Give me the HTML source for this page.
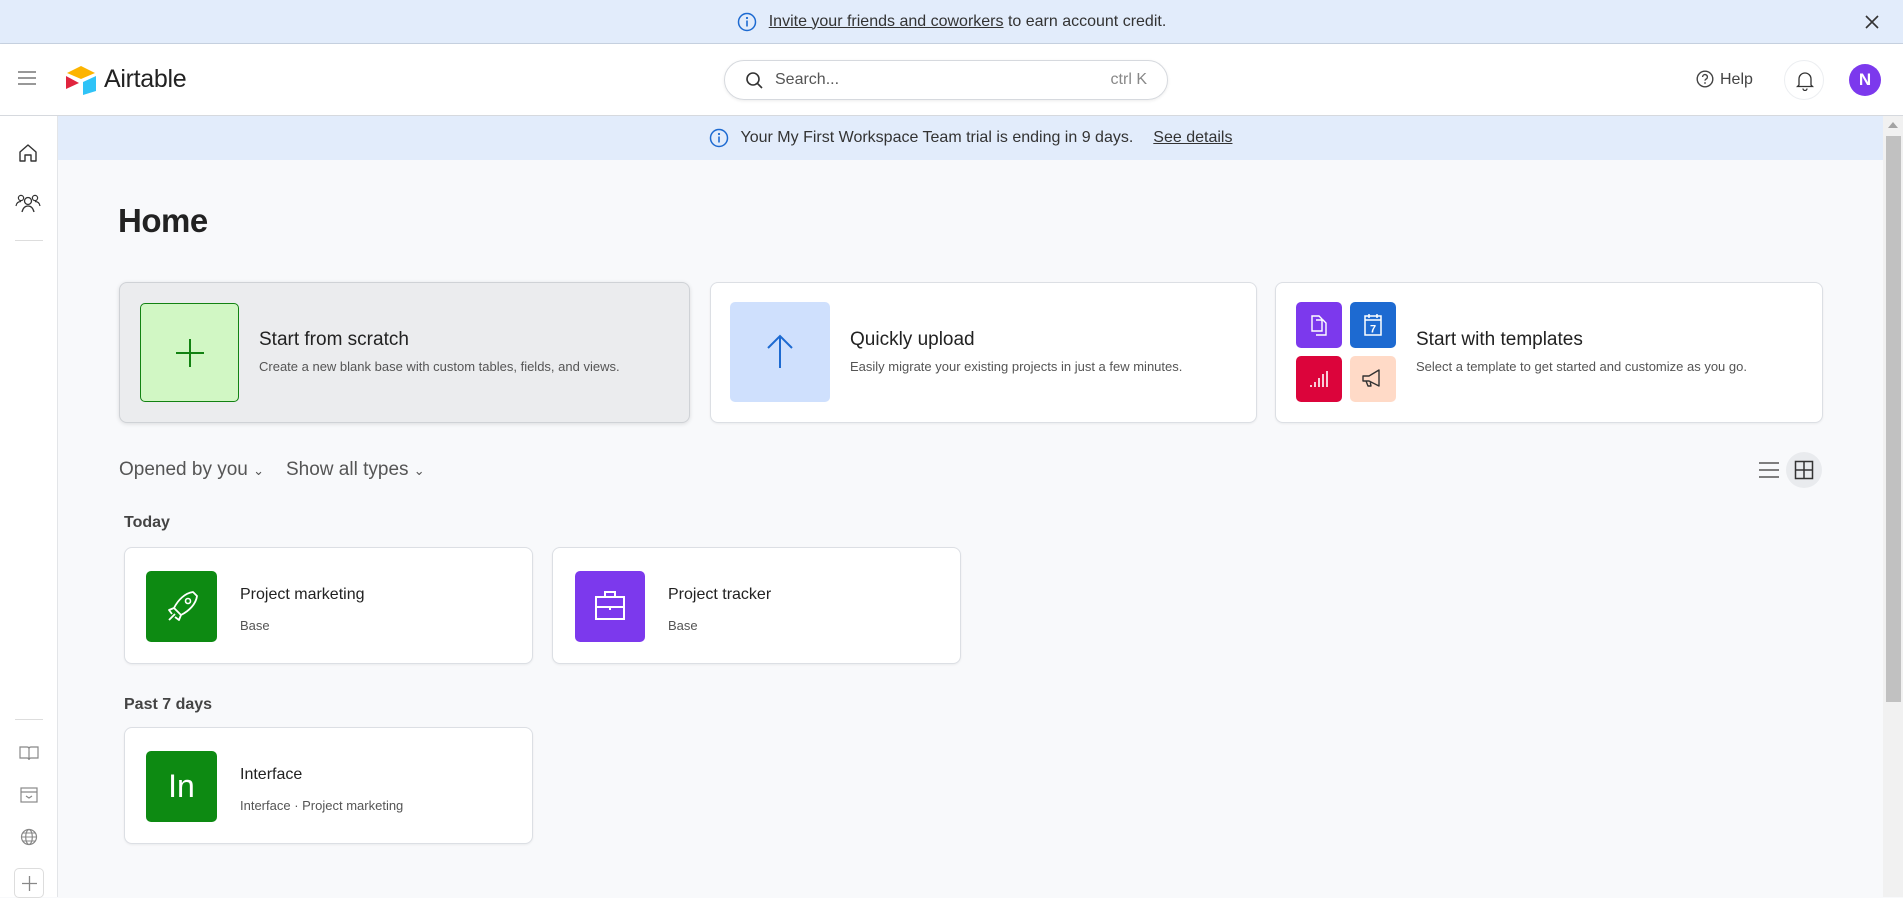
<!DOCTYPE html>
<html><head><meta charset="utf-8"><style>
*{box-sizing:border-box;margin:0;padding:0}
body{width:1903px;height:897px;overflow:hidden;font-family:"Liberation Sans",sans-serif;background:#f8f9fb;position:relative;color:#1d1f25}
.abs{position:absolute}
.topb{left:0;top:0;width:1903px;height:44px;background:#e2ecfb;border-bottom:1px solid #c8d3e2;font-size:16px;color:#333;display:flex;align-items:center;justify-content:center}
.hdr{left:0;top:44px;width:1903px;height:72px;background:#fff;border-bottom:1px solid #d6d9de;box-shadow:0 1px 3px rgba(0,0,0,.08)}
.side{left:0;top:116px;width:58px;height:781px;background:#fff;border-right:1px solid #e3e5e8}
.trial{left:58px;top:116px;width:1825px;height:44px;background:#e2ecfb;font-size:16px;color:#333;display:flex;align-items:center;justify-content:center}
.card{background:#fff;border:1px solid #dcdfe4;border-radius:8px;box-shadow:0 1px 2px rgba(0,0,0,.06)}
.bt{font-size:19px;color:#222}
.bs{font-size:13px;color:#555;margin-top:8px}
.pt{font-size:16px;color:#222}
.ps{font-size:13px;color:#555;margin-top:14px}
svg{display:block}
</style></head><body>
<div class="abs topb"><svg width="20" height="20" viewBox="0 0 20 20" style="margin-right:12px"><circle cx="10" cy="10" r="8.5" fill="none" stroke="#1d6ad1" stroke-width="1.5"/><rect x="9.2" y="8.5" width="1.6" height="6" fill="#1d6ad1"/><circle cx="10" cy="6" r="1.1" fill="#1d6ad1"/></svg><span><u>Invite your friends and coworkers</u> to earn account credit.</span></div>
<svg class="abs" style="left:1864px;top:14px" width="16" height="16" viewBox="0 0 16 16"><path d="M2 2L14 14M14 2L2 14" stroke="#333" stroke-width="1.6"/></svg>
<div class="abs hdr">
 <svg class="abs" style="left:17px;top:26px" width="20" height="16" viewBox="0 0 20 16"><path d="M1 2H19M1 8H19M1 14H19" stroke="#777" stroke-width="1.4"/></svg>
 <svg class="abs" style="left:64px;top:21px" width="34" height="30" viewBox="0 0 34 30"><path d="M3 8L17 1L31 8L17 14Z" fill="#fcb400"/><path d="M19 17L32 11V26L19 30Z" fill="#2fc3f7"/><path d="M2 11L15 18L2 24Z" fill="#e0243e"/></svg>
 <div class="abs" style="left:104px;top:21px;font-size:25px;color:#222;letter-spacing:-.3px">Airtable</div>
 <div class="abs" style="left:724px;top:16px;width:444px;height:40px;border:1px solid #d6d9de;border-radius:20px;box-shadow:0 1px 3px rgba(0,0,0,.08)">
  <svg class="abs" style="left:20px;top:10px" width="20" height="20" viewBox="0 0 20 20"><circle cx="8" cy="8" r="6" fill="none" stroke="#333" stroke-width="1.6"/><path d="M12.5 12.5L17 17" stroke="#333" stroke-width="1.6"/></svg>
  <div class="abs" style="left:50px;top:10px;font-size:16px;color:#555">Search...</div>
  <div class="abs" style="right:20px;top:10px;font-size:16px;color:#888">ctrl K</div>
 </div>
 <svg class="abs" style="left:1696px;top:26px" width="18" height="18" viewBox="0 0 18 18"><circle cx="9" cy="9" r="7.8" fill="none" stroke="#444" stroke-width="1.4"/><path d="M6.6 7a2.4 2.4 0 1 1 3.3 2.2c-.6.3-.9.7-.9 1.4" fill="none" stroke="#444" stroke-width="1.4"/><circle cx="9" cy="13" r=".9" fill="#444"/></svg>
 <div class="abs" style="left:1720px;top:27px;font-size:16px;color:#444">Help</div>
 <div class="abs" style="left:1784px;top:16px;width:40px;height:40px;border-radius:50%;border:1px solid #eceef1"><svg class="abs" style="left:11px;top:10px" width="18" height="20" viewBox="0 0 18 20"><path d="M3 14V8a6 6 0 0 1 12 0v6l1.5 1.5h-15Z M7 17.5a2 2 0 0 0 4 0" fill="none" stroke="#333" stroke-width="1.3"/></svg></div>
 <div class="abs" style="left:1849px;top:20px;width:32px;height:32px;border-radius:50%;background:#7c39ed;color:#fff;font-size:17px;font-weight:bold;text-align:center;line-height:32px">N</div>
</div>
<div class="abs side">
 <svg class="abs" style="left:17px;top:26px" width="22" height="22" viewBox="0 0 22 22"><path d="M3 10L11 3L19 10V19H14V13H8V19H3Z" fill="none" stroke="#333" stroke-width="1.4" stroke-linejoin="round"/></svg>
 <svg class="abs" style="left:15px;top:76px" width="26" height="22" viewBox="0 0 26 22"><circle cx="13" cy="9" r="3.5" fill="none" stroke="#333" stroke-width="1.3"/><path d="M7 20c1-4 3-6 6-6s5 2 6 6" fill="none" stroke="#333" stroke-width="1.3"/><circle cx="6" cy="6" r="2.6" fill="none" stroke="#333" stroke-width="1.2"/><circle cx="20" cy="6" r="2.6" fill="none" stroke="#333" stroke-width="1.2"/><path d="M1 14c.5-3 2.5-4.5 5-4.5M25 14c-.5-3-2.5-4.5-5-4.5" fill="none" stroke="#333" stroke-width="1.2"/></svg>
 <div class="abs" style="left:15px;top:124px;width:28px;height:1px;background:#ddd"></div>
 <div class="abs" style="left:15px;top:603px;width:28px;height:1px;background:#ddd"></div>
 <svg class="abs" style="left:19px;top:628px" width="20" height="18" viewBox="0 0 20 18"><path d="M1 3H8Q10 3 10 5V16Q10 14 8 14H1ZM19 3H12Q10 3 10 5V16Q10 14 12 14H19Z" fill="none" stroke="#888" stroke-width="1.2"/></svg>
 <svg class="abs" style="left:19px;top:670px" width="20" height="18" viewBox="0 0 20 18"><rect x="2" y="2" width="16" height="14" fill="none" stroke="#888" stroke-width="1.2"/><path d="M2 6H18M7 10L10 12L13 10" fill="none" stroke="#888" stroke-width="1.2"/></svg>
 <svg class="abs" style="left:19px;top:711px" width="20" height="20" viewBox="0 0 20 20"><circle cx="10" cy="10" r="7.5" fill="none" stroke="#888" stroke-width="1.2"/><ellipse cx="10" cy="10" rx="3.3" ry="7.5" fill="none" stroke="#888" stroke-width="1.2"/><path d="M2.5 10H17.5M4 6H16M4 14H16" stroke="#888" stroke-width="1.1"/></svg>
 <div class="abs" style="left:14px;top:752px;width:30px;height:30px;border:1px solid #ddd;border-radius:5px"><svg class="abs" style="left:6px;top:6px" width="17" height="17" viewBox="0 0 17 17"><path d="M8.5 1V16M1 8.5H16" stroke="#888" stroke-width="1.3"/></svg></div>
</div>
<div class="abs trial"><svg width="20" height="20" viewBox="0 0 20 20" style="margin-right:12px"><circle cx="10" cy="10" r="8.5" fill="none" stroke="#1d6ad1" stroke-width="1.5"/><rect x="9.2" y="8.5" width="1.6" height="6" fill="#1d6ad1"/><circle cx="10" cy="6" r="1.1" fill="#1d6ad1"/></svg><span>Your My First Workspace Team trial is ending in 9 days.</span><u style="margin-left:20px">See details</u></div>
<div class="abs" style="left:1883px;top:116px;width:20px;height:781px;background:#f1f1f1"><div class="abs" style="left:3px;top:20px;width:15px;height:566px;background:#c1c1c1"></div><svg class="abs" style="left:5px;top:6px" width="10" height="6"><path d="M0 6L5 0L10 6Z" fill="#a3a3a3"/></svg></div>

<div class="abs" style="left:118px;top:202px;font-size:33px;font-weight:bold;color:#222;letter-spacing:-.5px">Home</div>

<div class="abs card" style="left:119px;top:282px;width:571px;height:141px;background:#ebecee;border-color:#cfd2d6;box-shadow:0 1px 4px rgba(0,0,0,.12)">
 <div class="abs" style="left:20px;top:20px;width:99px;height:99px;background:#d1f7c4;border:1.5px solid #128212;border-radius:5px"><svg class="abs" style="left:33px;top:33px" width="32" height="32" viewBox="0 0 32 32"><path d="M16 2V30M2 16H30" stroke="#128212" stroke-width="2"/></svg></div>
 <div class="abs" style="left:139px;top:46px"><div class="bt">Start from scratch</div><div class="bs">Create a new blank base with custom tables, fields, and views.</div></div>
</div>
<div class="abs card" style="left:710px;top:282px;width:547px;height:141px">
 <div class="abs" style="left:19px;top:19px;width:100px;height:100px;background:#cfe0fd;border-radius:5px"><svg class="abs" style="left:35px;top:32px" width="30" height="36" viewBox="0 0 30 36"><path d="M15 2V34M3 14L15 2L27 14" fill="none" stroke="#1d6ad1" stroke-width="2"/></svg></div>
 <div class="abs" style="left:139px;top:46px"><div class="bt">Quickly upload</div><div class="bs">Easily migrate your existing projects in just a few minutes.</div></div>
</div>
<div class="abs card" style="left:1275px;top:282px;width:548px;height:141px">
 <div class="abs" style="left:20px;top:19px;width:46px;height:46px;background:#7c39ed;border-radius:5px"><svg class="abs" style="left:12px;top:10px" width="22" height="26" viewBox="0 0 22 26"><path d="M4 4H11L14 7V19H4Z M8 8H15L18 11V23H8" fill="none" stroke="#fff" stroke-width="1.4"/></svg></div>
 <div class="abs" style="left:74px;top:19px;width:46px;height:46px;background:#1d6ad1;border-radius:5px"><svg class="abs" style="left:12px;top:10px" width="22" height="26" viewBox="0 0 22 26"><rect x="3" y="4" width="16" height="19" fill="none" stroke="#fff" stroke-width="1.5"/><path d="M3 8H19M7 2V6M15 2V6" stroke="#fff" stroke-width="1.5"/><text x="11" y="20.5" fill="#fff" font-size="11" font-weight="bold" text-anchor="middle" font-family="Liberation Sans">7</text></svg></div>
 <div class="abs" style="left:20px;top:73px;width:46px;height:46px;background:#dc043b;border-radius:5px"><svg class="abs" style="left:12px;top:12px" width="22" height="22" viewBox="0 0 22 22"><path d="M3 19V17M7 19V14M11 19V10M15 19V6M19 19V3" stroke="#fff" stroke-width="1.6"/></svg></div>
 <div class="abs" style="left:74px;top:73px;width:46px;height:46px;background:#ffdac7;border-radius:5px"><svg class="abs" style="left:10px;top:11px" width="26" height="24" viewBox="0 0 26 24"><path d="M3 9H9L19 3V19L9 14H3Z M6 14L8 19H11L10 14" fill="none" stroke="#333" stroke-width="1.4" stroke-linejoin="round"/></svg></div>
 <div class="abs" style="left:140px;top:46px"><div class="bt">Start with templates</div><div class="bs">Select a template to get started and customize as you go.</div></div>
</div>

<div class="abs" style="left:119px;top:459px;font-size:19px;color:#555">Opened by you <span style="font-size:13px">&#8964;</span></div>
<div class="abs" style="left:286px;top:459px;font-size:19px;color:#555">Show all types <span style="font-size:13px">&#8964;</span></div>
<svg class="abs" style="left:1758px;top:461px" width="22" height="18" viewBox="0 0 22 18"><path d="M1 2H21M1 9H21M1 16H21" stroke="#555" stroke-width="1.4"/></svg>
<div class="abs" style="left:1786px;top:452px;width:36px;height:36px;border-radius:50%;background:#e9ebee"><svg class="abs" style="left:8px;top:8px" width="20" height="20" viewBox="0 0 20 20"><rect x="1.5" y="1.5" width="17" height="17" fill="none" stroke="#333" stroke-width="1.5"/><path d="M10 1.5V18.5M1.5 10H18.5" stroke="#333" stroke-width="1.5"/></svg></div>

<div class="abs" style="left:124px;top:514px;font-size:16px;font-weight:bold;color:#444">Today</div>
<div class="abs card" style="left:124px;top:547px;width:409px;height:117px">
 <div class="abs" style="left:21px;top:23px;width:71px;height:71px;background:#0d8a12;border-radius:5px"><svg class="abs" style="left:17px;top:17px" width="38" height="38" viewBox="0 0 38 38"><path d="M30 4C22 5 15 12 11 20L18 27C26 23 33 16 34 8Z M11 20L6 22L9 26 M18 27L16 32L12 29 M12 26L6 32" fill="none" stroke="#fff" stroke-width="1.8" stroke-linejoin="round"/><circle cx="25" cy="13" r="2.5" fill="none" stroke="#fff" stroke-width="1.6"/></svg></div>
 <div class="abs" style="left:115px;top:38px"><div class="pt">Project marketing</div><div class="ps">Base</div></div>
</div>
<div class="abs card" style="left:552px;top:547px;width:409px;height:117px">
 <div class="abs" style="left:22px;top:23px;width:70px;height:71px;background:#7c39ed;border-radius:5px"><svg class="abs" style="left:16px;top:16px" width="38" height="38" viewBox="0 0 38 38"><rect x="5" y="10" width="28" height="22" fill="none" stroke="#fff" stroke-width="2"/><path d="M14 10V5H24V10M5 20H33" fill="none" stroke="#fff" stroke-width="2"/><rect x="18" y="19" width="2" height="4" fill="#fff"/></svg></div>
 <div class="abs" style="left:115px;top:38px"><div class="pt">Project tracker</div><div class="ps">Base</div></div>
</div>
<div class="abs" style="left:124px;top:696px;font-size:16px;font-weight:bold;color:#444">Past 7 days</div>
<div class="abs card" style="left:124px;top:727px;width:409px;height:117px">
 <div class="abs" style="left:21px;top:23px;width:71px;height:71px;background:#0d8a12;border-radius:5px;color:#fff;font-size:32px;text-align:center;line-height:71px">In</div>
 <div class="abs" style="left:115px;top:38px"><div class="pt">Interface</div><div class="ps">Interface · Project marketing</div></div>
</div>
</body></html>
